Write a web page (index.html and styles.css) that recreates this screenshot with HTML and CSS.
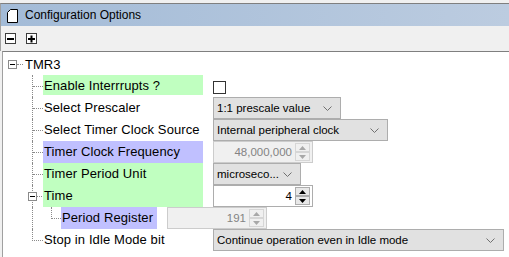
FILE: index.html
```html
<!DOCTYPE html>
<html>
<head>
<meta charset="utf-8">
<link rel="stylesheet" href="styles.css">
</head>
<body>
<div class="panel">
  <div class="titlebar">
    <svg class="doc" width="11" height="14" viewBox="0 0 11 14"><path d="M3.5 0.5 H10.5 V13.5 H0.5 V3.5 Z" fill="#fff" stroke="#000"/></svg>
    <span class="title">Configuration Options</span>
  </div>
  <div class="toolbar">
    <span class="tbtn"><svg width="11" height="11" viewBox="0 0 11 11"><rect x="0.5" y="0.5" width="10" height="10" fill="#fdfdfd" stroke="#3c3c3c"/><rect x="2" y="5" width="7" height="2" fill="#000"/></svg></span>
    <span class="tbtn"><svg width="11" height="11" viewBox="0 0 11 11"><rect x="0.5" y="0.5" width="10" height="10" fill="#fdfdfd" stroke="#3c3c3c"/><rect x="2" y="5" width="7" height="2" fill="#000"/><rect x="4.5" y="2.5" width="2" height="7" fill="#000"/></svg></span>
  </div>
  <div class="content">
    <div class="row root">
      <span class="exp"><svg width="9" height="9" viewBox="0 0 9 9"><rect x="0.5" y="0.5" width="8" height="8" fill="#fff" stroke="#8a8a8a"/><rect x="2" y="4" width="5" height="1" fill="#000"/></svg></span>
      <span class="roothook"></span>
      <span class="rootlabel">TMR3</span>
    </div>

    <div class="row">
      <span class="guide"></span>
      <span class="label short green">Enable Interrrupts ?</span>
      <span class="check"></span>
    </div>

    <div class="row">
      <span class="guide"></span>
      <span class="label">Select Prescaler</span>
      <span class="select w127"><span class="val">1:1 prescale value</span><svg class="chev" width="9" height="5" viewBox="0 0 9 5"><path d="M0.5 0.5 L4.5 4.5 L8.5 0.5" fill="none" stroke="#707070"/></svg></span>
    </div>

    <div class="row">
      <span class="guide"></span>
      <span class="label">Select Timer Clock Source</span>
      <span class="select w175"><span class="val">Internal peripheral clock</span><svg class="chev" width="9" height="5" viewBox="0 0 9 5"><path d="M0.5 0.5 L4.5 4.5 L8.5 0.5" fill="none" stroke="#707070"/></svg></span>
    </div>

    <div class="row">
      <span class="guide"></span>
      <span class="label blue">Timer Clock Frequency</span>
      <span class="spin disabled"><span class="num">48,000,000</span><span class="arrows"><span class="ab"><svg width="7" height="4" viewBox="0 0 7 4"><path d="M3.5 0 L7 4 H0 Z" fill="#a8a8a8"/></svg></span><span class="ab"><svg width="7" height="4" viewBox="0 0 7 4"><path d="M0 0 H7 L3.5 4 Z" fill="#a8a8a8"/></svg></span></span></span>
    </div>

    <div class="row">
      <span class="guide"></span>
      <span class="label green">Timer Period Unit</span>
      <span class="select w88"><span class="val">microseco...</span><svg class="chev" width="9" height="5" viewBox="0 0 9 5"><path d="M0.5 0.5 L4.5 4.5 L8.5 0.5" fill="none" stroke="#707070"/></svg></span>
    </div>

    <div class="row">
      <span class="guide exp-guide"><span class="exp small"><svg width="9" height="9" viewBox="0 0 9 9"><rect x="0.5" y="0.5" width="8" height="8" fill="#fff" stroke="#8a8a8a"/><rect x="2" y="4" width="5" height="1" fill="#000"/></svg></span></span>
      <span class="label green">Time</span>
      <span class="spin"><span class="num">4</span><span class="arrows"><span class="ab"><svg width="7" height="4" viewBox="0 0 7 4"><path d="M3.5 0 L7 4 H0 Z" fill="#000"/></svg></span><span class="ab"><svg width="7" height="4" viewBox="0 0 7 4"><path d="M0 0 H7 L3.5 4 Z" fill="#000"/></svg></span></span></span>
    </div>

    <div class="row">
      <span class="guide plain"></span>
      <span class="guide2"></span>
      <span class="label auto blue">Period Register</span>
      <span class="spin disabled"><span class="num">191</span><span class="arrows"><span class="ab"><svg width="7" height="4" viewBox="0 0 7 4"><path d="M3.5 0 L7 4 H0 Z" fill="#a8a8a8"/></svg></span><span class="ab"><svg width="7" height="4" viewBox="0 0 7 4"><path d="M0 0 H7 L3.5 4 Z" fill="#a8a8a8"/></svg></span></span></span>
    </div>

    <div class="row">
      <span class="guide last"></span>
      <span class="label">Stop in Idle Mode bit</span>
      <span class="select w291"><span class="val">Continue operation even in Idle mode</span><svg class="chev" width="9" height="5" viewBox="0 0 9 5"><path d="M0.5 0.5 L4.5 4.5 L8.5 0.5" fill="none" stroke="#707070"/></svg></span>
    </div>
  </div>
</div>
</body>
</html>
```

FILE: styles.css
```css
html, body {
  margin: 0;
  padding: 0;
  background: #f0f0f0;
  height: 100%;
  overflow: hidden;
}

.panel {
  padding-top: 3px;
  font-family: "Liberation Sans", Arial, sans-serif;
  font-size: 13px;
  color: #000;
}

.titlebar {
  height: 22px;
  border-top: 1px solid #7f7f7f;
  border-left: 1px solid #a0a0a0;
  background: linear-gradient(to right, #a3bbd7, #bccce0);
  display: flex;
  align-items: center;
  padding-left: 6px;
}

.doc {
  display: block;
  margin-right: 7px;
  margin-top: 1px;
}

.title {
  font-size: 12px;
}

.toolbar {
  height: 25px;
  border-left: 1px solid #a0a0a0;
  display: flex;
  align-items: center;
  padding-left: 4px;
  gap: 10px;
}

.tbtn svg {
  display: block;
}

.content {
  background: #fff;
  border-top: 1px solid #7f7f7f;
  border-left: 1px solid #a0a0a0;
  margin-left: 2px;
  height: 210px;
  padding-top: 1px;
}

.row {
  height: 22px;
  display: flex;
  align-items: center;
  white-space: nowrap;
}

.root .exp {
  margin-left: 5px;
}

.exp svg {
  display: block;
}

.roothook {
  width: 6px;
  border-top: 1px dotted #8a8a8a;
  margin-right: 2px;
}

.rootlabel {
  font-size: 13px;
}

.guide {
  align-self: stretch;
  width: 10px;
  margin-left: 29px;
  border-left: 1px dotted #8a8a8a;
  display: flex;
  align-items: center;
  flex: none;
}

.guide::before {
  content: "";
  width: 10px;
  border-top: 1px dotted #8a8a8a;
}

.guide.plain::before {
  display: none;
}

.guide.plain {
  width: 18px;
}

.guide.last {
  border-left: none;
  align-items: flex-start;
  width: 11px;
}

.guide.last::before {
  height: 11px;
  border-top: none;
  border-left: 1px dotted #8a8a8a;
  border-bottom: 1px dotted #8a8a8a;
  width: 10px;
}

.guide.exp-guide::before {
  display: none;
}

.exp.small {
  margin-left: -5px;
  margin-right: 0;
}

.exp-guide::after {
  content: "";
  width: 5px;
  border-top: 1px dotted #8a8a8a;
}

.guide2 {
  align-self: stretch;
  width: 10px;
  display: flex;
  flex-direction: column;
}

.guide2::before {
  content: "";
  height: 11px;
  border-left: 1px dotted #8a8a8a;
  border-bottom: 1px dotted #8a8a8a;
}

.label {
  width: 159px;
  height: 22px;
  line-height: 22px;
  padding-left: 1px;
  margin-right: 10px;
  flex: none;
  letter-spacing: 0.1px;
}

.label.short {
  height: 20px;
  align-self: flex-start;
  line-height: 21px;
}

.label.auto {
  width: 95px;
}

.green {
  background: #c0ffc0;
}

.blue {
  background: #c0c0ff;
}

.check {
  width: 11px;
  height: 11px;
  border: 1px solid #333;
  background: #fff;
  margin-top: 2px;
}

.select {
  border: 1px solid #adadad;
  background: #e1e1e1;
  display: flex;
  align-items: center;
  justify-content: space-between;
  padding: 0 8px 0 3px;
  box-sizing: border-box;
  height: 22px;
  font-size: 11.5px;
}

.w127 { width: 128px; }
.w175 { width: 175px; }
.w88 { width: 88px; }
.w291 { width: 291px; }

.chev {
  display: block;
}

.spin {
  width: 100px;
  height: 22px;
  box-sizing: border-box;
  border: 1px solid #adadad;
  background: #fff;
  display: flex;
  align-items: center;
  font-size: 11.5px;
  padding: 1px 2px 1px 0;
}

.spin.disabled {
  border-color: #cccccc;
  background: #f0f0f0;
  color: #838383;
}

.num {
  flex: 1;
  text-align: right;
  padding-right: 3px;
}

.arrows {
  display: flex;
  flex-direction: column;
  align-self: stretch;
}

.ab {
  width: 15px;
  flex: 1;
  display: flex;
  align-items: center;
  justify-content: center;
  border: 1px solid #adadad;
  background: #e8e8e8;
  box-sizing: border-box;
}

.spin.disabled .ab {
  border-color: #d6d6d6;
  background: #f0f0f0;
}

.ab svg {
  display: block;
}
```
